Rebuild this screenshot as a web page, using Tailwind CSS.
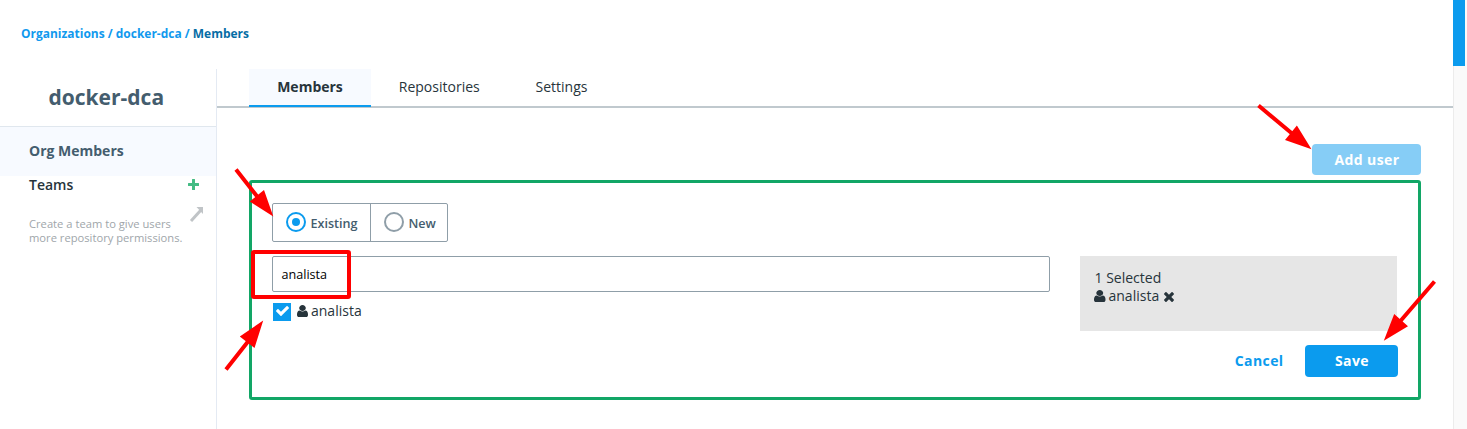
<!DOCTYPE html>
<html lang="en">
<head>
<meta charset="utf-8">
<title>docker-dca members</title>
<script src="https://cdn.jsdelivr.net/npm/@tailwindcss/browser@4"></script>
</head>
<body class="relative flex h-[429px] w-[1467px] overflow-hidden bg-white font-['Open_Sans',sans-serif] text-sm text-[#27343b]">
<div class="flex w-[1453px] flex-col">
  <nav class="h-[69px] shrink-0 pt-[24px] pl-[21px] text-[11.97px] leading-5 font-bold whitespace-nowrap text-[#1199ee]">Organizations / docker-dca / <span class="text-[#066da5]">Members</span></nav>
  <div class="flex flex-1">
    <aside class="w-[217px] shrink-0 border-r border-[#e4eaf3]">
      <h1 class="h-[57px] pt-[13px] pl-[48.500px] text-[21px] leading-[30px] font-bold text-[#445d6e]">docker-dca</h1>
      <div class="h-[50px] border-t border-[#e0e7ee] bg-[#f7faff] pt-[14px] pl-[29px] leading-5 font-bold text-[#445d6e]">Org Members</div>
      <div class="flex h-[18px] items-center justify-between pr-[17px] pl-[29px]">
        <span class="leading-[18px] font-semibold">Teams</span>
        <svg class="-mt-px h-[11px] w-[11px]" viewBox="0 0 11 11" fill="#44bc84"><path d="M4 .5Q4 0 4.500 0h2Q7 0 7 .5V4h3.500q.5 0 .5.5v2q0 .5-.5.5H7v3.500q0 .5-.5.5h-2q-.5 0-.5-.5V7H.5Q0 7 0 6.500v-2Q0 4 .5 4H4z"/></svg>
      </div>
      <div class="flex justify-between pt-[12px] pr-[12px] pl-[29px]">
        <p class="pt-[11px] text-[11.2px] leading-[14px] whitespace-nowrap text-[#a0a6aa]">Create a team to give users<br>more repository permissions.</p>
        <svg class="-ml-3 h-4 w-[15px] shrink-0" viewBox="0 0 15 16"><path d="M2 15 12 4" stroke="#c0c4c7" stroke-width="3"/><path d="M7.500 1H14v7z" fill="#c0c4c7"/></svg>
      </div>
    </aside>
    <main class="flex flex-1 flex-col">
      <div class="flex h-[39px] border-b-2 border-[#c0c9ce] pl-8 leading-5">
        <div class="h-[38px] w-[122px] border-b-2 border-[#0b9bee] bg-[#f7faff] pt-2 text-center font-bold">Members</div>
        <div class="w-[136px] pt-2 pl-[0.500px] text-center">Repositories</div>
        <div class="w-[109px] pt-2 text-center">Settings</div>
      </div>
      <div class="flex flex-col pt-9 pr-8 pl-8">
        <button class="h-[31px] w-[109px] self-end rounded-[4px] bg-[#86cdf6] pl-px font-bold tracking-[0.4px] text-white">Add user</button>
        <section class="mt-[5px] h-[220px] rounded-[3px] border-3 border-[#12a666] pt-5 pr-5 pl-5">
          <div class="flex h-[39px] w-[176px] rounded-[2px] border border-[#8f9ea8] text-[12.6px] font-semibold text-[#445d6e]">
            <label class="flex w-[98px] items-center border-r border-[#8f9ea8] pl-[13px]"><svg class="-mt-px mr-[4.500px] h-5 w-5 shrink-0" viewBox="0 0 20 20"><circle cx="10" cy="10" r="9" fill="none" stroke="#0b9bee" stroke-width="2"/><circle cx="10" cy="10" r="4" fill="#0b9bee"/></svg><span class="pt-[2px]">Existing</span></label>
            <label class="flex items-center pl-[13px]"><svg class="-mt-px mr-[4.500px] h-5 w-5 shrink-0" viewBox="0 0 20 20"><circle cx="10" cy="10" r="9" fill="none" stroke="#8f9ea8" stroke-width="2"/></svg><span class="pt-[2px]">New</span></label>
          </div>
          <div class="mt-[14px] flex justify-between pr-px">
            <div class="w-[778px]">
              <div class="flex h-9 items-center rounded-[2px] border border-[#8f9ea8] pt-px pl-[8.500px] text-[12.6px] text-black">analista</div>
              <div class="mt-[11px] flex h-[18px] items-center pl-px">
                <span class="flex h-[18px] w-[18px] items-center justify-center bg-[#0b9bee]"><svg class="-mt-[3px] h-[10px] w-[13px]" viewBox="121 334 1550 1188" fill="#fff"><path d="M1671 566q0 40-28 68l-724 724-136 136q-28 28-68 28t-68-28l-136-136-362-362q-28-28-28-68t28-68l136-136q28-28 68-28t68 28l294 295 656-657q28-28 68-28t68 28l136 136q28 28 28 68z"/></svg></span>
                <svg class="-mt-[2px] mr-[3px] ml-[6px] h-3 w-[11px]" viewBox="0 128 1280 1536" preserveAspectRatio="none" fill="#27343b"><path d="M1280 1399q0 109-62.500 187t-150.500 78h-854q-88 0-150.500-78t-62.500-187q0-85 8.500-160.500t31.500-152 58.500-131 94-89 134.500-34.500q131 128 313 128t313-128q76 0 134.500 34.500t94 89 58.500 131 31.500 152 8.500 160.500zm-256-887q0 159-112.500 271.500t-271.500 112.500-271.500-112.500-112.500-271.500 112.500-271.500 271.500-112.500 271.500 112.500 112.500 271.500z"/></svg>
                <span class="-mt-[2px]">analista</span>
              </div>
            </div>
            <div class="h-[75px] w-[317px] bg-[#e6e6e6] pt-[13px] pl-[14.500px] leading-[18px]">
              <div>1 Selected</div>
              <div class="flex items-center">
                <svg class="-ml-[0.500px] mr-[3px] h-3 w-[11.500px]" viewBox="0 128 1280 1536" preserveAspectRatio="none" fill="#27343b"><path d="M1280 1399q0 109-62.500 187t-150.500 78h-854q-88 0-150.500-78t-62.500-187q0-85 8.500-160.500t31.500-152 58.500-131 94-89 134.500-34.500q131 128 313 128t313-128q76 0 134.500 34.500t94 89 58.500 131 31.500 152 8.500 160.500zm-256-887q0 159-112.500 271.500t-271.500 112.500-271.500-112.500-112.500-271.500 112.500-271.500 271.500-112.500 271.500 112.500 112.500 271.500z"/></svg>
                <span>analista</span>
                <svg class="mt-px ml-[5px] h-[10px] w-[10px]" viewBox="302 366 1188 1188" fill="#27343b"><path d="M1490 1322q0 40-28 68l-136 136q-28 28-68 28t-68-28l-294-294-294 294q-28 28-68 28t-68-28l-136-136q-28-28-28-68t28-68l294-294-294-294q-28-28-28-68t28-68l136-136q28-28 68-28t68 28l294 294 294-294q28-28 68-28t68 28l136 136q28 28 28 68t-28 68l-294 294 294 294q28 28 28 68z"/></svg>
              </div>
            </div>
          </div>
          <div class="mt-[14px] flex items-center justify-end font-bold tracking-[0.4px]">
            <a class="mr-[21.500px] text-[#0b9bee]">Cancel</a>
            <button class="h-8 w-[93px] rounded-[4px] bg-[#0b9bee] pl-px text-white">Save</button>
          </div>
        </section>
      </div>
    </main>
  </div>
</div>
<div class="w-[14px] border-l border-[#ececec] bg-[#fafafa]"><div class="-ml-px h-[66px] w-3 bg-[#0b9bee]"></div></div>

<div class="absolute top-[250px] left-[251px] h-[49px] w-[100px] rounded-[3px] border-4 border-[#ff0000]"></div>
<svg class="absolute inset-0" width="1467" height="429" fill="#ff0000" stroke="none">
  <g stroke="#ff0000" stroke-width="4"><path d="M1258.500 105.500 1295 136M236 169.500 260 200M226 369.500 250 339M1434.500 281.500 1397 325"/></g>
  <path d="M1311.500 149.300 1296.900 125.500 1285 140zM273.300 216.500 264 190 249.700 201.500zM263.200 320.500 239.800 336.500 254.500 348zM1383.800 340.800 1394.200 314 1408 326.200z"/>
</svg>
</body>
</html>
